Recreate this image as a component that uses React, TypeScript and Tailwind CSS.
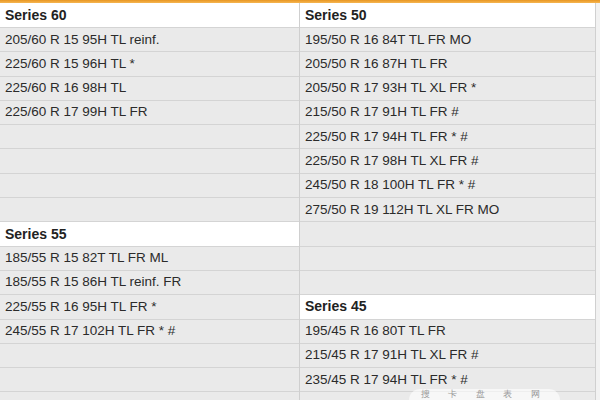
type Cell = { kind: "head" | "item" | "empty"; text?: string }

const h = (text: string): Cell => ({ kind: "head", text })
const i = (text: string): Cell => ({ kind: "item", text })
const e: Cell = { kind: "empty" }

const left: Cell[] = [
  h("Series 60"),
  i("205/60 R 15 95H TL reinf."),
  i("225/60 R 15 96H TL *"),
  i("225/60 R 16 98H TL"),
  i("225/60 R 17 99H TL FR"),
  e,
  e,
  e,
  e,
  h("Series 55"),
  i("185/55 R 15 82T TL FR ML"),
  i("185/55 R 15 86H TL reinf. FR"),
  i("225/55 R 16 95H TL FR *"),
  i("245/55 R 17 102H TL FR * #"),
  e,
  e,
  e,
]

const right: Cell[] = [
  h("Series 50"),
  i("195/50 R 16 84T TL FR MO"),
  i("205/50 R 16 87H TL FR"),
  i("205/50 R 17 93H TL XL FR *"),
  i("215/50 R 17 91H TL FR #"),
  i("225/50 R 17 94H TL FR * #"),
  i("225/50 R 17 98H TL XL FR #"),
  i("245/50 R 18 100H TL FR * #"),
  i("275/50 R 19 112H TL XL FR MO"),
  e,
  e,
  e,
  h("Series 45"),
  i("195/45 R 16 80T TL FR"),
  i("215/45 R 17 91H TL XL FR #"),
  i("235/45 R 17 94H TL FR * #"),
  e,
]

function Column({ cells }: { cells: Cell[] }) {
  return (
    <div className="flex flex-col">
      {cells.map((c, idx) =>
        c.kind === "head" ? (
          <div
            key={idx}
            className={`flex shrink-0 items-center border-b border-[#d4d4d4] bg-white pl-[5px] text-[14px] font-bold text-[#222] ${idx === 0 ? "h-[25px]" : "h-[24.3px]"}`}
          >
            {c.text}
          </div>
        ) : (
          <div
            key={idx}
            className="flex h-[24.3px] shrink-0 items-center border-b border-[#d4d4d4] bg-[#eaeaea] pl-[5px] text-[13.5px] text-[#2b2b2b]"
          >
            {c.text}
          </div>
        )
      )}
    </div>
  )
}

export default function App() {
  return (
    <div
      className="relative h-[400px] w-[600px] overflow-hidden bg-[#ececec]"
      style={{ fontFamily: '"Liberation Sans", Arial, sans-serif' }}
    >
      <div className="h-[3px] bg-gradient-to-b from-[#e8961e] to-[#f5b650]" />
      <div className="grid grid-cols-[300px_296px_4px]">
        <div className="border-r border-[#cfcfcf]">
          <Column cells={left} />
        </div>
        <div className="border-r border-[#d0d0d0]">
          <Column cells={right} />
        </div>
        <div className="bg-[#f2f2f2]" />
      </div>
      {/* faint site watermark at the bottom edge */}
      <div className="absolute bottom-0 right-[40px] rounded-t-full bg-white/60 px-[12px] text-[9px] leading-[11px] tracking-[8px] text-[#999]">
        搜 卡 盘 表 网
      </div>
    </div>
  )
}
